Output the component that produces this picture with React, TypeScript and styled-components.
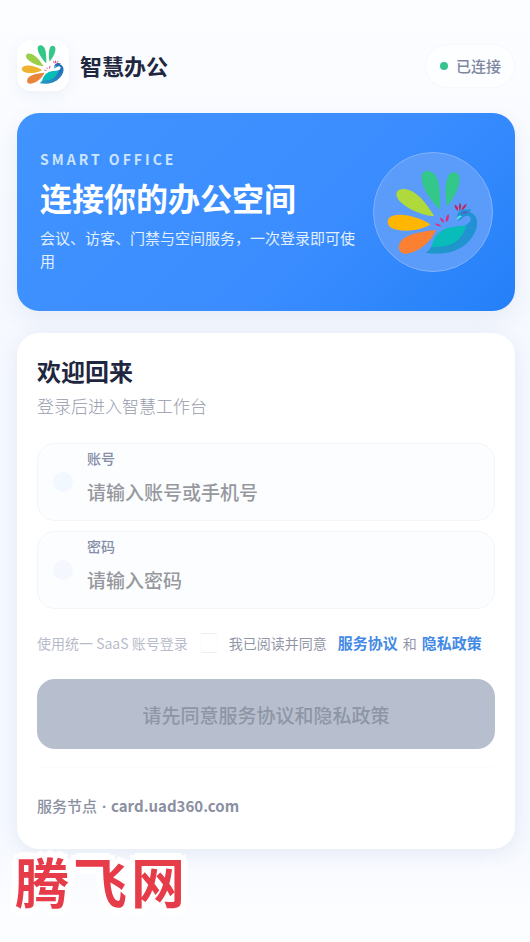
import React, { useState } from "react";
import styled, { createGlobalStyle } from "styled-components";

const GlobalStyle = createGlobalStyle`
  *, *::before, *::after { box-sizing: border-box; }
  body {
    margin: 0;
    background: #fbfdff;
    color: #1f2740;
    font-family: "Noto Sans CJK SC", sans-serif;
  }
  button, input { font: inherit; }
  h1, h2, p { margin: 0; }
`;

const Page = styled.main`
  display: flex;
  flex-direction: column;
  min-height: 100vh;
  padding: 40px 15px 20px 17px;
  background: linear-gradient(180deg, #fbfdff 0%, #f9fbff 14%, #f5f8ff 40%, #f5f8ff 88%, #fcfdff 97%);
`;

const Header = styled.header`
  display: flex;
  align-items: center;
  gap: 11px;
  margin-bottom: 22px;
`;

const LogoTile = styled.div`
  display: grid;
  place-items: center;
  width: 52px;
  height: 51px;
  border-radius: 14px;
  background: #fff;
  box-shadow: 0 4px 14px rgba(80, 110, 170, 0.08);
`;

const AppName = styled.h1`
  flex: 1;
  padding-bottom: 2px;
  font-size: 22px;
  line-height: 32px;
  font-weight: 700;
`;

const Status = styled.div`
  display: flex;
  align-items: center;
  gap: 8px;
  height: 44px;
  padding: 0 13px 0 14px;
  border: 1px solid #f6f8fc;
  border-radius: 22px;
  background: #fdfeff;
  color: #7d879f;
  font-size: 15px;
  font-weight: 500;
`;

const Dot = styled.span`
  width: 8px;
  height: 8px;
  border-radius: 50%;
  background: #35c48d;
`;

const Hero = styled.section`
  display: flex;
  align-items: center;
  justify-content: space-between;
  gap: 16px;
  min-height: 198px;
  padding: 24px 22px 24px 23px;
  border-radius: 22px;
  background: linear-gradient(135deg, #4193ff 0%, #3b8dff 60%, #2480f8 100%);
  box-shadow: 0 8px 22px rgba(70, 100, 160, 0.09);
  color: #fff;
`;

const HeroText = styled.div`
  flex: 1;
  min-width: 0;
  padding-bottom: 4px;
`;

const Eyebrow = styled.p`
  color: #cbe4ff;
  font-size: 14px;
  line-height: 20px;
  font-weight: 700;
  letter-spacing: 3px;
`;

const HeroTitle = styled.h2`
  margin: 4px 0 5px;
  font-size: 32px;
  line-height: 48px;
  font-weight: 700;
  white-space: nowrap;
`;

const HeroDescription = styled.p`
  color: #e1efff;
  font-size: 15px;
  line-height: 23px;
`;

const Emblem = styled.div`
  flex: none;
  width: 120px;
  height: 120px;
  overflow: hidden;
  border: 1px solid #80b3fb;
  border-radius: 50%;
  background: #5b9bfa;
`;

const Card = styled.form`
  display: flex;
  flex-direction: column;
  margin-top: 22px;
  padding: 20px 20px 31px;
  border-radius: 22px;
  background: #fff;
  box-shadow: 0 4px 18px rgba(70, 95, 150, 0.1);
`;

const CardTitle = styled.h2`
  font-size: 24px;
  line-height: 36px;
  font-weight: 700;
`;

const CardSubtitle = styled.p`
  margin: 3px 0 24px;
  color: #969bac;
  font-size: 17px;
  line-height: 27px;
  font-weight: 300;
`;

const FieldBox = styled.label`
  display: grid;
  grid-template-columns: 20px 1fr;
  align-items: center;
  column-gap: 14px;
  height: 78px;
  margin-bottom: 10px;
  padding: 0 15px;
  border: 1px solid #f2f5fa;
  border-radius: 18px;
  background: #fcfdff;
`;

const FieldMark = styled.span<{ $tint: string }>`
  width: 20px;
  height: 20px;
  border-radius: 50%;
  background: ${(p) => p.$tint};
`;

const FieldBody = styled.span`
  display: flex;
  flex-direction: column;
  gap: 5px;
  min-width: 0;
  padding-bottom: 9px;
`;

const FieldLabel = styled.span`
  color: #858ea7;
  font-size: 14px;
  line-height: 22px;
  font-weight: 500;
`;

const TextInput = styled.input`
  width: 100%;
  height: 34px;
  padding: 0;
  border: 0;
  outline: 0;
  background: transparent;
  color: #1f2740;
  font-size: 19px;
  font-weight: 500;
  &::placeholder { color: #96989d; opacity: 1; }
`;

const Terms = styled.div`
  display: flex;
  align-items: center;
  margin: 13px 0 25px;
  color: #9297a7;
  font-size: 14px;
  line-height: 22px;
  white-space: nowrap;
`;

const Hint = styled.span`
  margin-right: 12px;
  color: #b8bcca;
`;

const Agree = styled.label`
  display: flex;
  align-items: center;
  gap: 11px;
  margin-right: 11px;
`;

const Checkbox = styled.input`
  appearance: none;
  width: 18px;
  height: 20px;
  margin: 0;
  border: 1px solid #eceef2;
  border-left-color: #fcfcfd;
  border-right-color: #fcfcfd;
  border-radius: 3px;
  background: #fff;
  &:checked { background: #2f80ed; }
`;

const TermsLink = styled.a`
  color: #4389e5;
  font-size: 15px;
  font-weight: 700;
  text-decoration: none;
`;

const And = styled.span`
  margin: 0 5px;
`;

const Submit = styled.button`
  height: 70px;
  border: 0;
  border-radius: 18px;
  background: #2f80ed;
  color: #fff;
  font-size: 19px;
  font-weight: 500;
  &:disabled {
    background: #b7bfce;
    color: #8e96a5;
  }
`;

const Node = styled.p`
  margin-top: 18px;
  padding-top: 26px;
  border-top: 1px solid #fcfcfd;
  color: #8a90a1;
  font-size: 15px;
  line-height: 24px;
  font-weight: 500;
`;

const Host = styled.span`
  font-weight: 700;
`;

const Separator = styled.span`
  margin: 0 1px;
  font-family: "Noto Sans", sans-serif;
  font-weight: 700;
`;

const Brand = styled.p`
  display: flex;
  align-self: flex-start;
  gap: 4px;
  margin-top: -2px;
  margin-left: -2px;
  color: #e63b49;
  font-family: KaiTi, STKaiti, "Noto Sans CJK SC", sans-serif;
  font-size: 54px;
  line-height: 68px;
  font-weight: 700;
  text-shadow:
    7px 0 1px #fff, -7px 0 1px #fff, 0 7px 1px #fff, 0 -7px 1px #fff,
    5px 5px 1px #fff, -5px 5px 1px #fff, 5px -5px 1px #fff, -5px -5px 1px #fff,
    3px 0 1px #fff, -3px 0 1px #fff, 0 3px 1px #fff, 0 -3px 1px #fff;
`;

function Peacock({ size, vivid = false }: { size: number; vivid?: boolean }) {
  const body = vivid ? "bodyVivid" : "bodySoft";
  return (
    <svg
      width={size}
      height={size}
      viewBox={vivid ? "76 84 288 288" : "40 37 360 360"}
      display="block"
      aria-hidden="true"
    >
      <defs>
        <linearGradient id={body} x1="0" y1="1" x2="1" y2="0">
          <stop offset="0" stopColor={vivid ? "#2499c4" : "#1d97c8"} />
          <stop offset="1" stopColor={vivid ? "#2569b8" : "#2390d6"} />
        </linearGradient>
      </defs>
      <path fill="#33c889" d="M242 210C218 190 187 145 185 113C184 93 201 88 216 95C240 107 242 155 242 210Z" />
      <path fill="#33c889" d="M263 199C256 166 257 122 268 104C278 91 300 94 301 113C303 141 284 174 263 199Z" />
      <path fill={vivid ? "#9bcf48" : "#b0d93b"} d="M224 230C185 227 133 204 113 177C102 158 112 146 132 147C168 149 197 187 224 230Z" />
      <path fill={vivid ? "#efb32d" : "#ffb600"} d="M212 255C187 273 126 281 94 266C76 255 79 235 95 229C129 218 182 235 212 255Z" />
      <path fill={vivid ? "#e9853b" : "#fb8032"} d="M229 272C217 306 174 341 139 344C116 345 111 325 120 309C137 283 190 276 229 272Z" />
      <path fill={`url(#${body})`} d="M198 341C216 332 218 312 235 289C255 268 288 262 315 259C332 252 338 243 334 234C330 226 318 228 311 235C306 240 300 242 294 244C290 231 295 216 308 211C316 207 327 211 335 208L333 218C350 224 357 240 354 259C349 290 323 322 284 336C256 346 222 345 198 341Z" />
      <path fill="#08bcba" d="M216 325C219 297 239 275 263 266C281 260 302 261 322 258C316 281 300 304 276 315C256 325 235 321 216 325Z" />
      <path fill="#63d6ed" d="M293 243C291 235 294 230 302 228L310 230C303 233 298 238 293 243Z" />
      <path fill="#6c4cb1" d="M306 220Q317 213 327 216Q317 225 306 220Z" />
      <g fill={vivid ? "#e94891" : "#e02b7c"}>
        <path d="M225 253Q236 250 246 261Q233 262 225 253Z" />
        <path d="M241 234Q252 238 255 250Q243 247 241 234Z" />
        <path d="M268 223Q271 241 260 248Q256 232 268 223Z" />
      </g>
      <g fill="#c32558">
        <path d="M286 194Q298 199 296 214Q286 207 286 194Z" />
        <path d="M302 188Q310 200 301 214Q296 201 302 188Z" />
        <path d="M323 192Q320 206 307 212Q310 197 323 192Z" />
      </g>
    </svg>
  );
}

interface FieldProps {
  id: string;
  label: string;
  placeholder: string;
  type: string;
  tint: string;
}

function Field({ id, label, placeholder, type, tint }: FieldProps) {
  return (
    <FieldBox htmlFor={id}>
      <FieldMark $tint={tint} />
      <FieldBody>
        <FieldLabel>{label}</FieldLabel>
        <TextInput id={id} type={type} placeholder={placeholder} />
      </FieldBody>
    </FieldBox>
  );
}

export default function App() {
  const [agreed, setAgreed] = useState(false);
  return (
    <>
      <GlobalStyle />
      <Page>
        <Header>
          <LogoTile><Peacock size={44} vivid /></LogoTile>
          <AppName>智慧办公</AppName>
          <Status><Dot />已连接</Status>
        </Header>
        <Hero>
          <HeroText>
            <Eyebrow>SMART OFFICE</Eyebrow>
            <HeroTitle>连接你的办公空间</HeroTitle>
            <HeroDescription>会议、访客、门禁与空间服务，一次登录即可使用</HeroDescription>
          </HeroText>
          <Emblem><Peacock size={118} /></Emblem>
        </Hero>
        <Card onSubmit={(e) => e.preventDefault()}>
          <CardTitle>欢迎回来</CardTitle>
          <CardSubtitle>登录后进入智慧工作台</CardSubtitle>
          <Field id="account" label="账号" placeholder="请输入账号或手机号" type="text" tint="#f2f8ff" />
          <Field id="password" label="密码" placeholder="请输入密码" type="password" tint="#f5f7ff" />
          <Terms>
            <Hint>使用统一 SaaS 账号登录</Hint>
            <Agree htmlFor="agree">
              <Checkbox
                id="agree"
                type="checkbox"
                checked={agreed}
                onChange={(e) => setAgreed(e.target.checked)}
              />
              我已阅读并同意
            </Agree>
            <TermsLink href="#service">服务协议</TermsLink>
            <And>和</And>
            <TermsLink href="#privacy">隐私政策</TermsLink>
          </Terms>
          <Submit type="submit" disabled={!agreed}>
            {agreed ? "登录" : "请先同意服务协议和隐私政策"}
          </Submit>
          <Node>服务节点<Separator> · </Separator><Host>card.uad360.com</Host></Node>
        </Card>
        <Brand><span>腾</span><span>飞</span><span>网</span></Brand>
      </Page>
    </>
  );
}
